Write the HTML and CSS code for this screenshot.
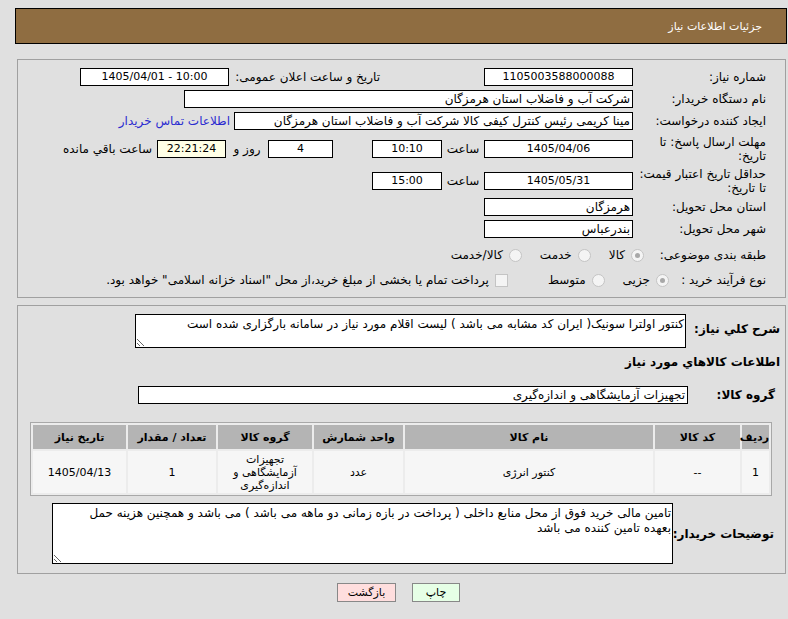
FILE: index.html
```html
<!DOCTYPE html>
<html lang="fa" dir="rtl">
  <head>
    <meta charset="UTF-8" />
    <meta name="viewport" content="width=device-width, initial-scale=1.0" />
    <title>جزئیات اطلاعات نیاز</title>
    <link rel="stylesheet" href="styles.css">
  </head>
  <body>
    <div class="page">
      <div class="title">جزئیات اطلاعات نیاز</div>

      <div class="panel main_info">
        <div class="row r1">
          <div class="lbl">شماره نیاز:</div>
          <div class="fld w149 center">1105003588000088</div>
          <div class="lbl_pub">تاریخ و ساعت اعلان عمومی:</div>
          <div class="fld w149 center" dir="ltr">1405/04/01 - 10:00</div>
        </div>
        <div class="row">
          <div class="lbl">نام دستگاه خریدار:</div>
          <div class="fld w449">شرکت آب و فاضلاب استان هرمزگان</div>
        </div>
        <div class="row">
          <div class="lbl">ایجاد کننده درخواست:</div>
          <div class="fld w399">مینا کریمی رئیس کنترل کیفی کالا شرکت آب و فاضلاب استان هرمزگان</div>
          <a class="contact" href="#">اطلاعات تماس خریدار</a>
        </div>
        <div class="row tall">
          <div class="lbl">مهلت ارسال پاسخ: تا<br>تاریخ:</div>
          <div class="fld w149 center">1405/04/06</div>
          <div class="unit">ساعت</div>
          <div class="fld w70 center">10:10</div>
          <div class="fld w65 center days">4</div>
          <div class="unit w39">روز و</div>
          <div class="fld w69 center remain">22:21:24</div>
          <div class="after">ساعت باقي مانده</div>
        </div>
        <div class="row tall2">
          <div class="lbl">حداقل تاریخ اعتبار قیمت:<br>تا تاریخ:</div>
          <div class="fld w149 center">1405/05/31</div>
          <div class="unit">ساعت</div>
          <div class="fld w70 center">15:00</div>
        </div>
        <div class="row">
          <div class="lbl">استان محل تحویل:</div>
          <div class="fld w149">هرمزگان</div>
        </div>
        <div class="row">
          <div class="lbl">شهر محل تحویل:</div>
          <div class="fld w149">بندرعباس</div>
        </div>
        <div class="row opts">
          <div class="lbl lbl_cat">طبقه بندی موضوعی:</div>
          <span class="radio on"></span><span class="opt">کالا</span>
          <span class="radio"></span><span class="opt">خدمت</span>
          <span class="radio"></span><span class="opt">کالا/خدمت</span>
        </div>
        <div class="row opts2">
          <div class="lbl lbl_narrow">نوع فرآیند خرید :</div>
          <span class="radio on"></span><span class="opt">جزیی</span>
          <span class="radio"></span><span class="opt">متوسط</span>
          <span class="check"></span><span class="opt">پرداخت تمام یا بخشی از مبلغ خرید،از محل "اسناد خزانه اسلامی" خواهد بود.</span>
        </div>
      </div>

      <div class="panel goods_info">
        <div class="row desc_row">
          <div class="blbl w94">شرح کلي نياز:</div>
          <textarea class="area desc" readonly>کنتور اولترا سونیک( ایران کد مشابه می باشد ) لیست اقلام مورد نیاز در سامانه بارگزاری شده است</textarea>
        </div>
        <div class="sub_title">اطلاعات کالاهاي مورد نياز</div>
        <div class="row group_row">
          <div class="blbl w92">گروه کالا:</div>
          <div class="fld w550">تجهیزات آزمایشگاهی و اندازه‌گیری</div>
        </div>

        <table class="goods">
          <colgroup>
            <col style="width: 27px">
            <col style="width: 85px">
            <col style="width: 248px">
            <col style="width: 89px">
            <col style="width: 94px">
            <col style="width: 88px">
            <col style="width: 93px">
          </colgroup>
          <thead>
            <tr>
              <th>ردیف</th>
              <th>کد کالا</th>
              <th>نام کالا</th>
              <th>واحد شمارش</th>
              <th>گروه کالا</th>
              <th>تعداد / مقدار</th>
              <th>تاریخ نیاز</th>
            </tr>
          </thead>
          <tbody>
            <tr>
              <td>1</td>
              <td>--</td>
              <td>کنتور انرژی</td>
              <td>عدد</td>
              <td>تجهیزات آزمایشگاهی و اندازه‌گیری</td>
              <td>1</td>
              <td>1405/04/13</td>
            </tr>
          </tbody>
        </table>

        <div class="row notes_row">
          <div class="blbl w107">توضیحات خریدار:</div>
          <textarea class="area notes" readonly>تامین مالی خرید فوق از محل منابع داخلی ( پرداخت در بازه زمانی دو ماهه می باشد ) می باشد و همچنین هزینه حمل بعهده تامین کننده می باشد</textarea>
        </div>
      </div>

      <div class="buttons">
        <button class="btn print" type="button">چاپ</button>
        <button class="btn back" type="button">بازگشت</button>
      </div>
    </div>
  </body>
</html>
```

FILE: styles.css
```css
*,
*::before,
*::after {
  box-sizing: border-box;
}
html {
  font-family: "DejaVu Sans", Tahoma, sans-serif;
  font-size: 12px;
  margin: 0;
  padding: 0;
}
body {
  margin: 0;
  background: #e0e0e0;
  color: #000;
}

.page {
  padding: 8px 1px 0 15px;
}

.title {
  height: 36px;
  display: flex;
  align-items: center;
  padding-right: 24px;
  background: #8f6d41;
  border: 1px solid #000;
  color: #fff;
  font-size: 11px;
}

.panel {
  border: 1px solid #a0a0a0;
  margin: 0 1px 0 2px;
}

.main_info {
  margin-top: 15px;
  height: 239px;
  padding: 6px 17px 0 0;
}

.row {
  display: flex;
  align-items: center;
  height: 22px;
}
.row.tall {
  height: 33px;
}
.row.tall2 {
  height: 31px;
}
.row.opts {
  height: 30px;
}
.row.opts2 {
  height: 20px;
}

.lbl {
  width: 135px;
  flex: none;
  padding-right: 2px;
  line-height: 14px;
  white-space: nowrap;
}
.lbl_cat {
  width: 124px;
}
.lbl_narrow {
  width: 99px;
}

.fld {
  height: 18px;
  flex: none;
  background: #fff;
  border: 1px solid #000;
  padding: 0 2px;
  line-height: 16px;
  white-space: nowrap;
  overflow: hidden;
}
.center {
  text-align: center;
  font-size: 11px;
}
.w149 { width: 149px; }
.w449 { width: 449px; }
.w399 { width: 399px; }
.w70 { width: 70px; }
.w65 { width: 65px; }
.w69 { width: 69px; }
.w550 { width: 550px; }
.w39 { width: 39px; }

.lbl_pub {
  width: 151px;
  margin-right: 104px;
  flex: none;
  white-space: nowrap;
}

.contact {
  margin-right: 4px;
  color: #2b2bd0;
  text-decoration: none;
}

.unit {
  width: 42px;
  flex: none;
  text-align: center;
}
.days {
  margin-right: 39px;
}
.remain {
  background: #ffffe6;
}
.after {
  margin-right: 5px;
}

.radio {
  width: 13px;
  height: 13px;
  flex: none;
  border-radius: 50%;
  border: 1px solid #c4c4c4;
  background: #f4f4f4;
  display: flex;
  align-items: center;
  justify-content: center;
}
.radio.on::after {
  content: "";
  width: 5px;
  height: 5px;
  border-radius: 50%;
  background: #a8a8a8;
}
.check {
  width: 13px;
  height: 13px;
  flex: none;
  border: 1px solid #c4c4c4;
  background: #f4f4f4;
  margin-right: 22px;
}
.opt {
  margin: 0 6px 0 18px;
  white-space: nowrap;
}

.goods_info {
  margin-top: 7px;
  height: 269px;
  padding: 8px 5px 0 0;
}

.blbl {
  flex: none;
  font-weight: bold;
  font-size: 12px;
  white-space: nowrap;
}
.w94 { width: 94px; }
.w92 { width: 92px; padding-right: 5px; }
.w107 { width: 107px; padding-right: 6px; }

.desc_row {
  height: 35px;
  align-items: flex-start;
}
.desc_row .blbl {
  padding-top: 8px;
}

.area {
  flex: none;
  margin: 0;
  border: 1px solid #000;
  background: #fff;
  font-family: inherit;
  font-size: 12px;
  padding: 2px 1px;
  line-height: 15px;
  color: #000;
  outline: none;
}
.desc {
  width: 551px;
  height: 34px;
}
.notes {
  width: 621px;
  height: 61px;
  padding-left: 30px;
}

.sub_title {
  height: 26px;
  line-height: 26px;
  font-weight: bold;
  font-size: 12px;
}

.group_row {
  height: 40px;
}

.goods {
  width: 741px;
  margin: 7px 8px 0 0;
  table-layout: fixed;
  border-collapse: separate;
  border-spacing: 2px;
  border: 1px solid #a8a8a8;
  background: #ececec;
  font-size: 11px;
}
.goods th {
  height: 24px;
  background: #b4b4b4;
  font-weight: bold;
  padding: 0;
}
.goods td {
  height: 42px;
  background: #f6f6f6;
  text-align: center;
  padding: 0 4px;
  line-height: 13px;
}

.notes_row {
  height: 61px;
  margin-top: 7px;
}

.buttons {
  display: flex;
  justify-content: center;
  gap: 16px;
  margin-top: 9px;
  padding-right: 5px;
}
.btn {
  height: 19px;
  font-family: inherit;
  font-size: 11px;
  padding: 0;
  border: 1px solid #888;
  color: #000;
}
.print {
  width: 48px;
  background: #e6ffe6;
}
.back {
  width: 59px;
  background: #ffdede;
}
```
